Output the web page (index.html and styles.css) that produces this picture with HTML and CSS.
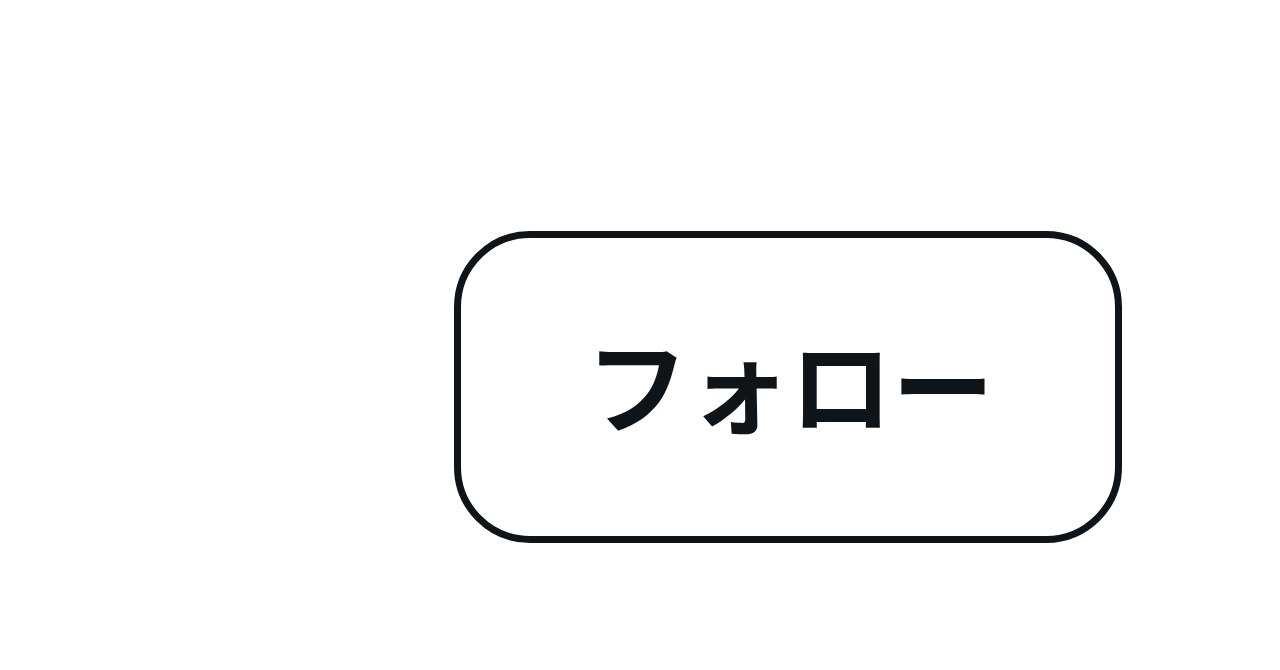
FILE: index.html
```html
<!DOCTYPE html>
<html lang="ja">
<head>
<meta charset="utf-8">
<title>フォロー</title>
<link rel="stylesheet" href="styles.css">
</head>
<body>
<main class="stage">
  <button class="follow-btn" type="button">フォロー</button>
</main>
</body>
</html>
```
FILE: styles.css
```css
html, body {
  margin: 0;
  padding: 0;
  background: #ffffff;
}

.stage {
  width: 1280px;
  height: 670px;
  box-sizing: border-box;
  padding: 231px 0 0 454px;
}

.follow-btn {
  box-sizing: border-box;
  width: 668px;
  height: 312px;
  border: 7px solid #0f1419;
  border-radius: 76px;
  background: #ffffff;
  color: #0f1419;
  font-family: "Noto Sans CJK JP", "Noto Sans", sans-serif;
  font-weight: 700;
  font-size: 102px;
  line-height: 1;
  display: flex;
  align-items: center;
  justify-content: center;
  padding: 0 0 10px 4px;
  cursor: pointer;
}
```
